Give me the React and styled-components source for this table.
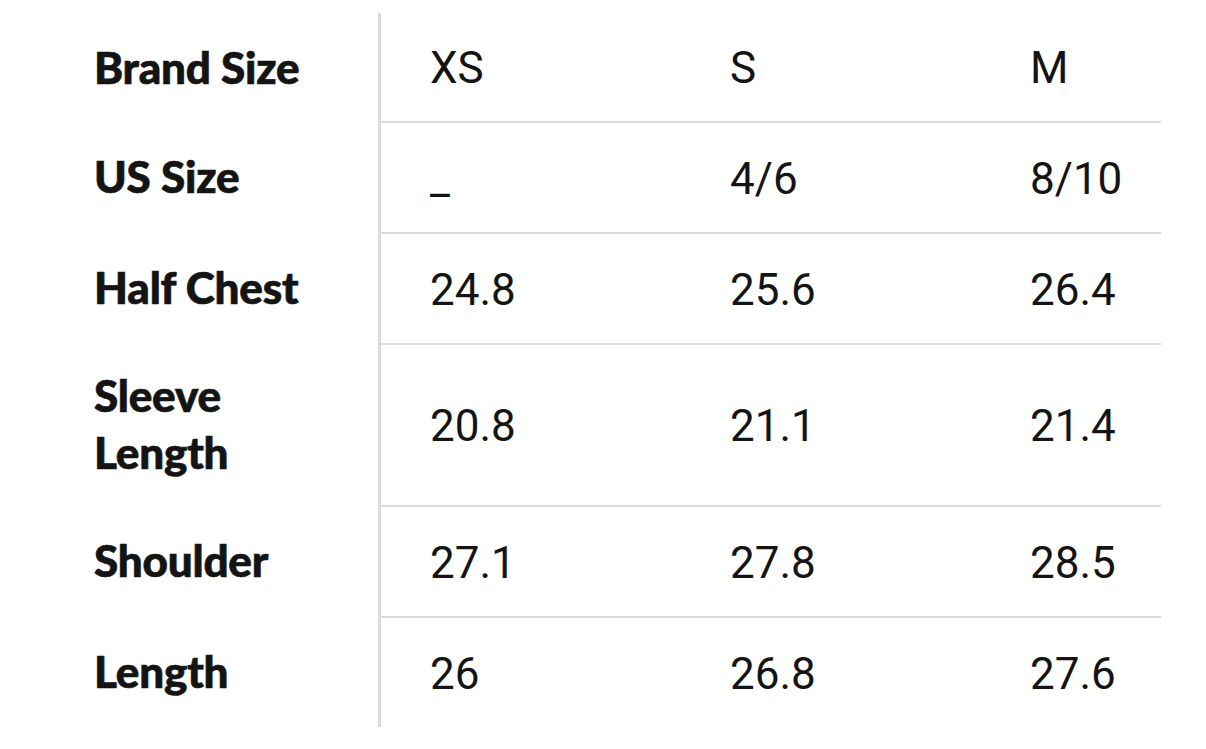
import styled, { createGlobalStyle } from "styled-components"

const GlobalStyle = createGlobalStyle`
  body {
    margin: 0;
    background: #ffffff;
  }
`

const sizes = ["XS", "S", "M"]

const rows = [
  { label: "Brand Size", values: ["XS", "S", "M"] },
  { label: "US Size", values: ["_", "4/6", "8/10"] },
  { label: "Half Chest", values: ["24.8", "25.6", "26.4"] },
  { label: "Sleeve Length", values: ["20.8", "21.1", "21.4"], wrap: true },
  { label: "Shoulder", values: ["27.1", "27.8", "28.5"] },
  { label: "Length", values: ["26", "26.8", "27.6"] },
]

const App = () => {
  return (
    <>
      <GlobalStyle />
      <SizeChart>
        {rows.map((row, i) => (
          <Row key={row.label} $first={i === 0}>
            <Label $wrap={row.wrap}>{row.label}</Label>
            <Values $first={i === 0}>
              {row.values.map((v, j) => (
                <Value key={sizes[j]}>{v}</Value>
              ))}
            </Values>
          </Row>
        ))}
      </SizeChart>
    </>
  )
}

export default App

const SizeChart = styled.section`
  padding-top: 13px;
  width: 1161px;
  display: flex;
  flex-direction: column;
  color: #141414;
`

const Row = styled.div`
  display: flex;
  align-items: stretch;
  min-height: ${(p) => (p.$first ? "108px" : "111px")};
`

const Label = styled.div`
  width: 378px;
  flex-shrink: 0;
  padding: 24px ${(p) => (p.$wrap ? "130px" : "0")} 24px 94px;
  box-sizing: border-box;
  display: flex;
  align-items: center;
  font-family: Lato, "Liberation Sans", sans-serif;
  font-weight: 900;
  font-size: 44px;
  line-height: 57px;
  letter-spacing: -0.2px;
  -webkit-text-stroke: 0.7px #141414;
  white-space: ${(p) => (p.$wrap ? "normal" : "nowrap")};
`

const Values = styled.div`
  flex: 1;
  display: flex;
  overflow: hidden;
  border-left: 3px solid #d9dcdc;
  border-top: ${(p) => (p.$first ? "none" : "2px solid #d9dcdc")};
`

const Value = styled.div`
  width: 300px;
  flex-shrink: 0;
  padding: 2px 0 0 49px;
  box-sizing: border-box;
  display: flex;
  align-items: center;
  font-family: Roboto, "Liberation Sans", sans-serif;
  font-weight: 400;
  font-size: 44px;
`
